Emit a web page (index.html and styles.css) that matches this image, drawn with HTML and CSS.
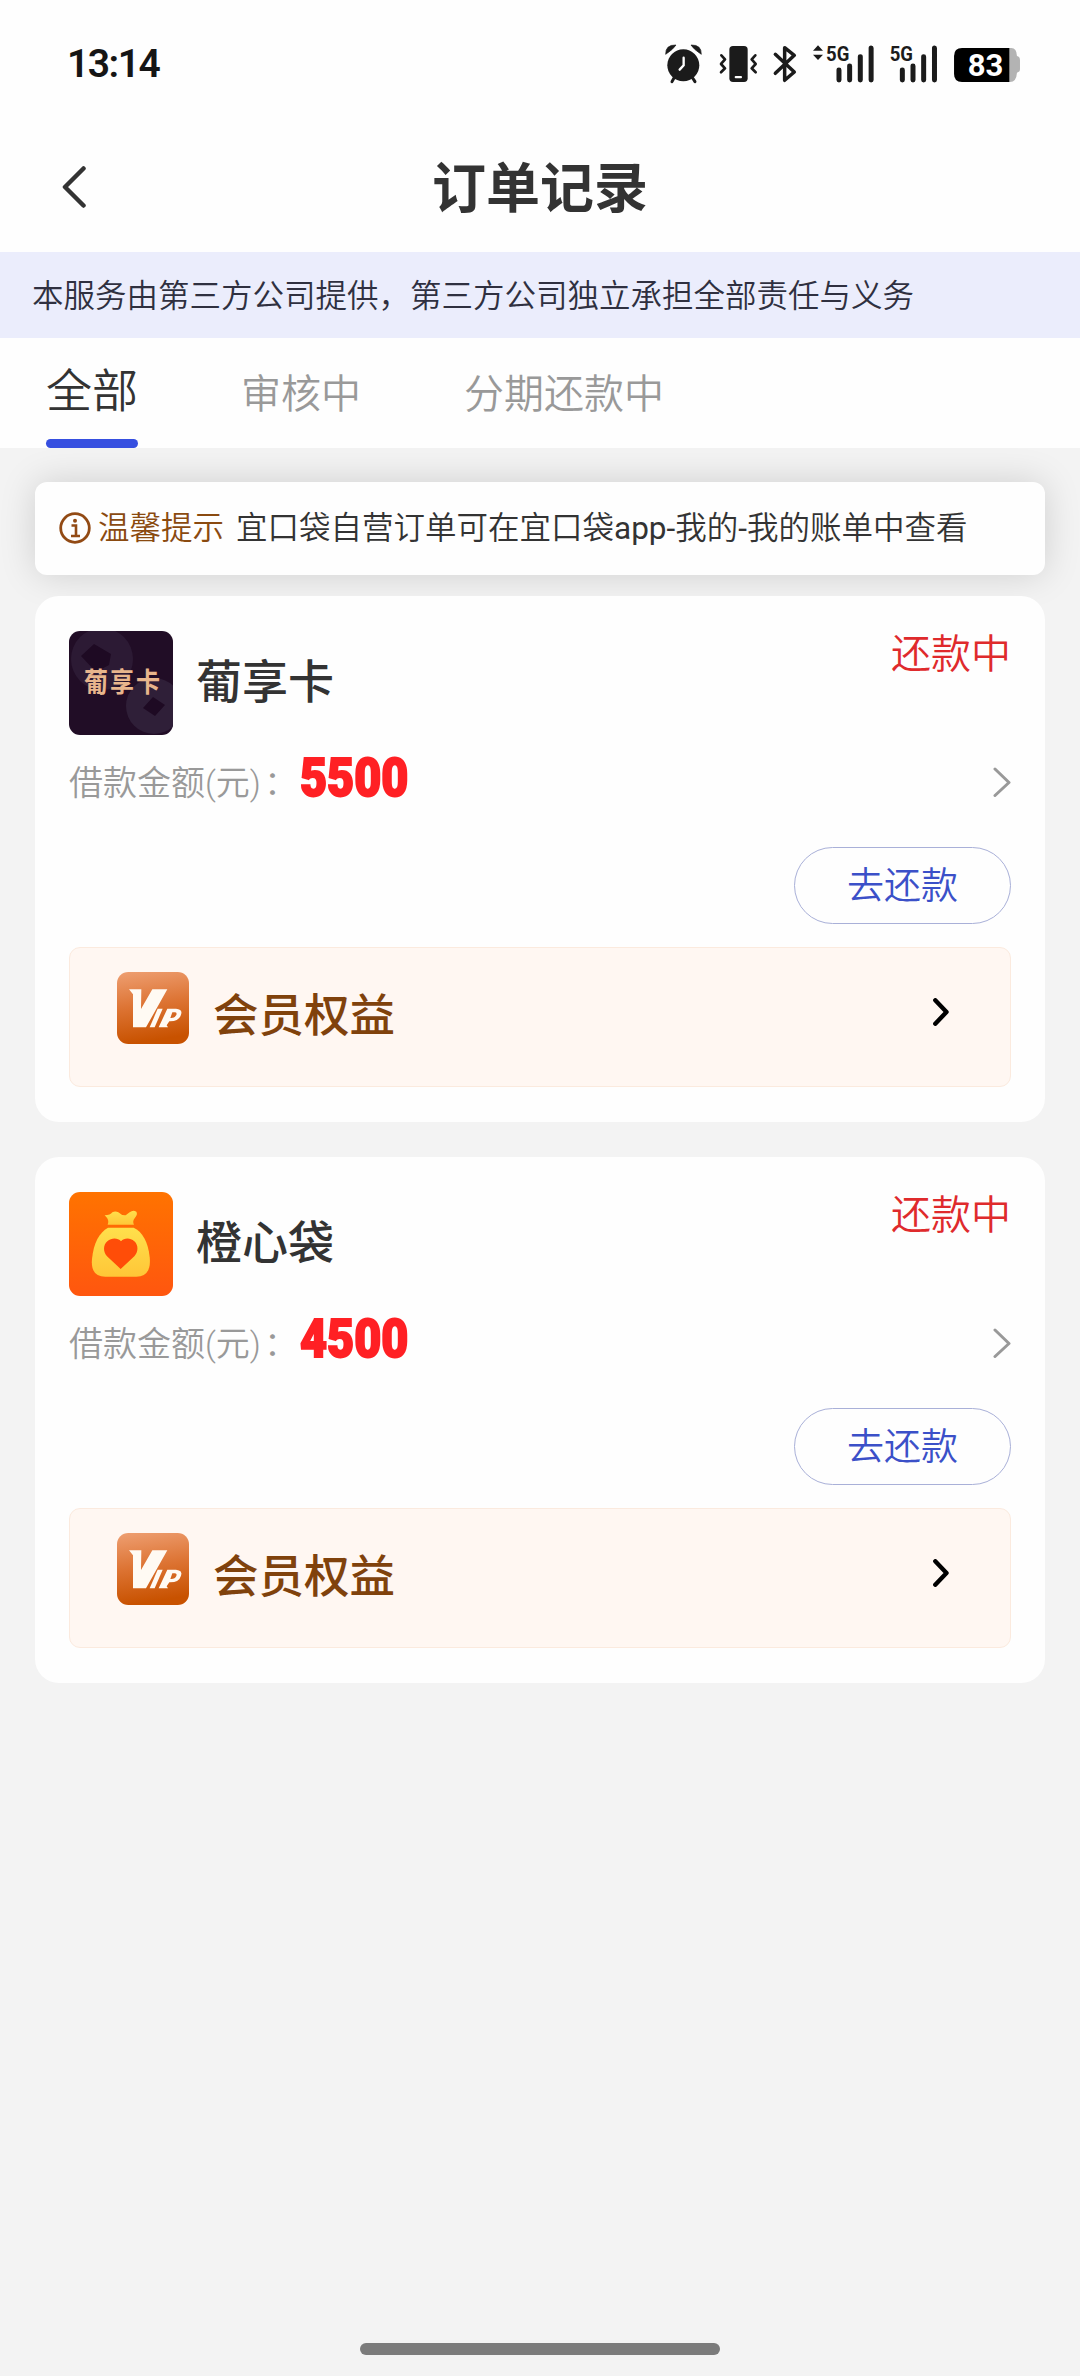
FILE: index.html
```html
<!DOCTYPE html>
<html lang="zh-CN">
<head>
<meta charset="utf-8">
<title>订单记录</title>
<link rel="stylesheet" href="styles.css">
</head>
<body>
<svg class="defs" width="0" height="0" aria-hidden="true">
  <defs>
    <linearGradient id="vip-bg" x1="0" y1="0" x2="0.15" y2="1">
      <stop offset="0" stop-color="#ee9f72"/><stop offset="0.5" stop-color="#dd7434"/><stop offset="1" stop-color="#c85200"/>
    </linearGradient>
    <linearGradient id="bag-bg" x1="0" y1="0" x2="0" y2="1">
      <stop offset="0" stop-color="#ff7300"/><stop offset="1" stop-color="#ff560f"/>
    </linearGradient>
    <linearGradient id="bag" x1="0" y1="0" x2="0" y2="1">
      <stop offset="0" stop-color="#ffe04c"/><stop offset="1" stop-color="#ffc637"/>
    </linearGradient>
    <symbol id="vip" viewBox="0 0 216 216">
      <rect width="216" height="216" rx="34" fill="url(#vip-bg)"/>
      <path fill="#fffaf3" d="M36 52H73L72 111L106 52H151L87 166H48V67Z"/>
      <path fill="#fffaf3" d="M122 110H137L113 166H98Z"/>
      <path fill="#fffaf3" fill-rule="evenodd" d="M151 110H177Q198 112 192 128Q186 149 157 148L149 160L153 166H125ZM166 121L160 138Q174 139 178 129Q181 121 173 121Z"/>
    </symbol>
  </defs>
</svg>

<header class="top">
  <div class="status-bar">
    <span class="clock">13:14</span>
    <div class="status-icons">
      <svg class="ic-alarm" viewBox="75 72 112 118" width="37.3" height="39.3">
        <circle cx="130" cy="136" r="48" fill="#1b1b1b"/>
        <path d="M77 103Q76 74 108 75Q100 88 77 103ZM184 103Q185 74 153 75Q161 88 184 103Z" fill="#1b1b1b" stroke="#1b1b1b" stroke-width="2" stroke-linejoin="round"/>
        <path d="M102 174L96 185M158 174L165 185" stroke="#1b1b1b" stroke-width="9" stroke-linecap="round"/>
        <path d="M131 113V136L119 149" fill="none" stroke="#fff" stroke-width="7" stroke-linecap="round"/>
      </svg>
      <svg class="ic-vibrate" viewBox="236 72 116 118" width="38.7" height="39.3">
        <rect x="267" y="78" width="55" height="108" rx="11" fill="#1b1b1b"/>
        <rect x="283" y="168" width="22" height="7" rx="3" fill="#fff"/>
        <path d="M243 106L254 118L242 132L254 145L242 157M345 106L334 118L346 132L334 145L346 157" fill="none" stroke="#1b1b1b" stroke-width="8" stroke-linejoin="round" stroke-linecap="round"/>
      </svg>
      <svg class="ic-bluetooth" viewBox="396 72 76 118" width="25.3" height="39.3">
        <path d="M406 103L463 156L434 181V83L463 106L406 160" fill="none" stroke="#1b1b1b" stroke-width="10.500" stroke-linejoin="round" stroke-linecap="round"/>
      </svg>
      <svg class="ic-sim1" viewBox="515 72 190 118" width="63.3" height="39.3">
        <path d="M533 76L548 92H518ZM533 120L518 104H548Z" fill="#1b1b1b"/>
        <text x="557" y="122" textLength="70" lengthAdjust="spacingAndGlyphs" class="net">5G</text>
        <path d="M596 150V180M628 138V180M660 110V180M692.500 84V180" stroke="#1b1b1b" stroke-width="15" stroke-linecap="round"/>
      </svg>
      <svg class="ic-sim2" viewBox="745 72 150 118" width="50" height="39.3">
        <text x="747" y="122" textLength="70" lengthAdjust="spacingAndGlyphs" class="net">5G</text>
        <path d="M785 150V180M817 138V180M849 110V180M881.500 84V180" stroke="#1b1b1b" stroke-width="15" stroke-linecap="round"/>
      </svg>
      <svg class="ic-battery" viewBox="942 72 200 118" width="66.7" height="39.3">
        <path d="M1106 84H1114Q1130 84 1131 108Q1140 110 1140 120V148Q1140 156 1131 158Q1129 186 1110 186H1106Z" fill="#b3b3b3"/>
        <path d="M1108 84H966Q942 84 942 108V162Q942 186 966 186H1108Z" fill="#000"/>
        <text x="983" y="169" textLength="107" lengthAdjust="spacingAndGlyphs" class="level">83</text>
      </svg>
    </div>
  </div>
  <div class="nav">
    <svg class="back" viewBox="0 0 24 42" width="24" height="42"><path d="M21.500 2.500L3 21L21.500 39.500" fill="none" stroke="#333" stroke-width="4.500" stroke-linecap="round" stroke-linejoin="round"/></svg>
    <h1 class="title">订单记录</h1>
  </div>
</header>

<p class="notice">本服务由第三方公司提供，第三方公司独立承担全部责任与义务</p>

<nav class="tabs">
  <a class="tab active">全部</a>
  <a class="tab">审核中</a>
  <a class="tab">分期还款中</a>
</nav>

<main class="content">
  <div class="tip">
    <svg class="info" viewBox="0 0 32 32" width="32" height="32"><circle cx="16" cy="16" r="14.300" fill="none" stroke="#924a14" stroke-width="2.800"/><path d="M12.500 13.500H17V23.500M12 24H21" fill="none" stroke="#924a14" stroke-width="2.600"/><circle cx="16" cy="8.800" r="2" fill="#924a14"/></svg>
    <span class="tip-label">温馨提示</span>
    <span class="tip-text">宜口袋自营订单可在宜口袋<b class="latin">app-</b>我的<b class="latin">-</b>我的账单中查看</span>
  </div>

  <article class="card">
    <div class="card-head">
      <div class="logo logo-grape">
        <svg class="logo-art" viewBox="0 0 104 104" width="104" height="104">
          <rect width="104" height="104" fill="#210d26"/>
          <circle cx="33" cy="28" r="31" fill="#2c1a34"/><circle cx="85" cy="75" r="28" fill="#2f1f38"/>
          <path d="M12 25L25 13L42 23L40 34L27 41ZM74 77L84 66L96 74L86 85Z" fill="#1e0a23"/>
        </svg>
        <span class="logo-text">葡享卡</span>
      </div>
      <h2 class="name">葡享卡</h2>
      <span class="state">还款中</span>
    </div>
    <div class="amount-row">
      <span class="label">借款金额(元)<span class="colon">：</span></span>
      <span class="amount">5500</span>
      <svg class="go" viewBox="0 0 18 30" width="18" height="30"><path d="M2 2L16 15.500L2 28.500" fill="none" stroke="#999" stroke-width="3" stroke-linecap="round" stroke-linejoin="round"/></svg>
    </div>
    <button class="pay">去还款</button>
    <div class="vip">
      <svg class="vip-icon" width="72" height="72"><use href="#vip"/></svg>
      <span class="vip-text">会员权益</span>
      <svg class="vip-go" viewBox="0 0 16 28" width="16" height="28"><path d="M2.300 2.300L13.500 14L2.300 25.700" fill="none" stroke="#000" stroke-width="4.400" stroke-linecap="round" stroke-linejoin="round"/></svg>
    </div>
  </article>

  <article class="card">
    <div class="card-head">
      <div class="logo">
        <svg class="logo-art" viewBox="117 123 312 312" width="104" height="104">
          <rect x="117" y="123" width="312" height="312" fill="url(#bag-bg)"/>
          <path d="M224 193Q241 193 247 184Q256 179 265 184Q275 194 287 193L299 184Q309 176 319 182Q324 189 315 200Q306 211 312 221H233Q240 208 224 193Z" fill="url(#bag)"/>
          <path d="M234 230H311C337 242 354 272 359 318Q365 377 319 377H226Q181 377 186 324C191 274 208 245 234 230Z" fill="url(#bag)"/>
          <path d="M272 354L231 316C219 302 219 282 232 271C246 259 264 261 273 271C282 261 300 259 313 271C326 283 325 303 313 316Z" fill="#ff4d08"/>
        </svg>
      </div>
      <h2 class="name">橙心袋</h2>
      <span class="state">还款中</span>
    </div>
    <div class="amount-row">
      <span class="label">借款金额(元)<span class="colon">：</span></span>
      <span class="amount">4500</span>
      <svg class="go" viewBox="0 0 18 30" width="18" height="30"><path d="M2 2L16 15.500L2 28.500" fill="none" stroke="#999" stroke-width="3" stroke-linecap="round" stroke-linejoin="round"/></svg>
    </div>
    <button class="pay">去还款</button>
    <div class="vip">
      <svg class="vip-icon" width="72" height="72"><use href="#vip"/></svg>
      <span class="vip-text">会员权益</span>
      <svg class="vip-go" viewBox="0 0 16 28" width="16" height="28"><path d="M2.300 2.300L13.500 14L2.300 25.700" fill="none" stroke="#000" stroke-width="4.400" stroke-linecap="round" stroke-linejoin="round"/></svg>
    </div>
  </article>
</main>

<footer class="home"><div class="home-bar"></div></footer>
</body>
</html>
```
FILE: styles.css
```css
* { box-sizing: border-box; margin: 0; padding: 0; }
body {
  display: flex;
  flex-direction: column;
  width: 1080px;
  height: 2376px;
  overflow: hidden;
  background: #f3f3f3;
  color: #333;
  font-family: Roboto, "Noto Sans CJK SC", sans-serif;
  font-weight: 350;
}
svg { display: block; flex: none; }
.defs { position: absolute; }
span, h1, h2, a, p { white-space: nowrap; }

.top { height: 252px; background: #fefefe; }
.status-bar { display: flex; justify-content: space-between; align-items: center; height: 128px; padding: 0 59px 0 67px; }
.clock { font-size: 39px; font-weight: 600; letter-spacing: -1.5px; line-height: 40px; color: #151515; }
.status-icons { display: flex; align-items: center; }
.status-icons svg { overflow: visible; }
.ic-vibrate { margin-left: 16.300px; }
.ic-bluetooth { margin-left: 14.700px; }
.ic-sim1 { margin-left: 14.300px; }
.ic-sim2 { margin-left: 13.300px; }
.ic-battery { margin-left: 15.700px; }
.net { font: 700 62px Roboto, sans-serif; fill: #1b1b1b; }
.level { font: 700 94px Roboto, sans-serif; fill: #fff; }
.nav { display: grid; grid-template-columns: 86px 1fr 86px; align-items: center; height: 120px; padding-bottom: 2px; }
.back { justify-self: end; }
.title { padding-top: 6px; text-align: center; font-size: 54px; line-height: 60px; font-weight: 700; }

.notice { height: 86px; padding-left: 32px; background: #ebedfc; font-size: 31.500px; line-height: 89px; color: #2f3040; }

.tabs { display: flex; gap: 103px; height: 110px; padding-left: 46px; background: #fefefe; }
.tab { display: flex; align-items: center; height: 110px; padding-bottom: 5px; font-size: 40px; color: #999; }
.tab.active { flex-direction: column; justify-content: space-between; padding: 19px 0 0; font-size: 46px; line-height: 68px; color: #333; }
.tab.active::after { content: ""; width: 92px; height: 9px; border-radius: 4.500px; background: #364fe0; }

.content { flex: 1; padding: 34px 35px 0; }
.tip { display: flex; align-items: center; height: 93px; margin-bottom: 21px; padding: 0 24px 2px; border-radius: 12px; background: #fefefe; box-shadow: 0 0 36px rgba(0, 0, 0, 0.15); font-size: 31.500px; }
.tip span { padding-bottom: 5px; }
.tip-label { margin-left: 7px; color: #8a4a10; }
.tip-text { margin-left: 12px; }
.latin { font-weight: 400; }

.card { height: 526px; margin-bottom: 35px; padding: 35px 34px; border-radius: 24px; background: #fefefe; }
.card-head { display: flex; height: 104px; }
.logo { display: grid; width: 104px; height: 104px; border-radius: 11px; overflow: hidden; place-items: center; }
.logo-art, .logo-text { grid-area: 1 / 1; }
.logo-text { z-index: 1; margin-left: 4px; font-size: 24px; font-weight: 600; letter-spacing: 2px; color: #e8b58c; line-height: 30px; transform: scaleY(1.15); }
.name { flex: 1; margin-left: 23px; font-size: 46px; font-weight: 500; line-height: 102px; }
.state { margin-top: -6px; font-size: 40px; line-height: 60px; height: 60px; color: #df2a2c; }
.amount-row { display: flex; align-items: center; height: 93px; }
.label { width: 231px; margin-bottom: 3px; font-size: 34px; color: #999; }
.colon { margin-left: 3px; }
.amount { flex: 1; margin-bottom: 7px; font-size: 54px; line-height: 56px; font-weight: 900; color: #ff2024; -webkit-text-stroke: 2px #ff2024; transform: scaleX(0.865); transform-origin: left; }
.pay { display: block; width: 217px; height: 77px; margin: 19px 0 23px auto; padding-bottom: 6px; border: 1px solid #a9b0d8; border-radius: 39px; background: transparent; font: 350 37px Roboto, "Noto Sans CJK SC", sans-serif; color: #3b50c8; }
.vip { display: flex; height: 140px; padding: 24px 61px 0 47px; border: 1px solid #fbeade; border-radius: 11px; background: #fff7f2; }
.vip-text { flex: 1; margin-left: 24px; font-size: 45.500px; line-height: 89px; height: 86px; font-weight: 500; color: #80420c; }
.vip-go { margin-top: 26px; }

.home { display: flex; justify-content: center; align-items: flex-start; height: 33px; }
.home-bar { width: 360px; height: 12px; border-radius: 6px; background: #7b7b7b; }
```
